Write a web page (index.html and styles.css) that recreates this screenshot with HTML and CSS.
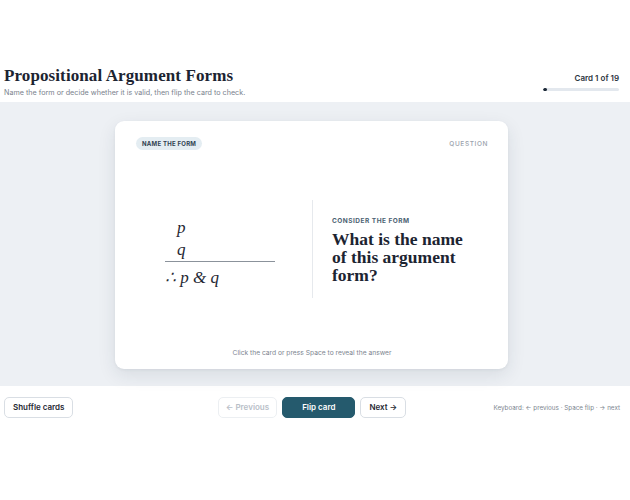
FILE: index.html
```html
<!DOCTYPE html>
<html lang="en">
<head>
<meta charset="utf-8">
<title>Propositional Argument Forms</title>
<link rel="stylesheet" href="styles.css">
</head>
<body>
<div class="app">
  <header class="top">
    <div class="titles">
      <h1 class="title">Propositional Argument Forms</h1>
      <p class="subtitle">Name the form or decide whether it is valid, then flip the card to check.</p>
    </div>
    <div class="progress">
      <div class="count">Card 1 of 19</div>
      <div class="track"><div class="fill" style="width:5.26%"></div></div>
    </div>
  </header>

  <main class="stage">
    <section class="card">
      <div class="card-head">
        <span class="pill">NAME THE FORM</span>
        <span class="side">QUESTION</span>
      </div>
      <div class="card-body">
        <div class="formula-col">
          <div class="formula">
            <div class="premise">p</div>
            <div class="premise">q</div>
            <div class="rule"></div>
            <div class="conclusion">∴ p &amp; q</div>
          </div>
        </div>
        <div class="prompt-col">
          <div class="eyebrow">CONSIDER THE FORM</div>
          <h2 class="question">What is the name of this argument form?</h2>
        </div>
      </div>
      <div class="hint">Click the card or press Space to reveal the answer</div>
    </section>
  </main>

  <footer class="controls">
    <div class="left">
      <button class="btn">Shuffle cards</button>
    </div>
    <div class="nav">
      <button class="btn disabled">← Previous</button>
      <button class="btn primary">Flip card</button>
      <button class="btn">Next →</button>
    </div>
    <div class="keys">Keyboard: ← previous · Space flip · → next</div>
  </footer>
</div>
</body>
</html>
```

FILE: styles.css
```css
* { box-sizing: border-box; }
html, body { margin: 0; padding: 0; background: #ffffff; }
body {
  font-family: Inter, "Liberation Sans", sans-serif;
  color: #1e2733;
}
.app { padding-top: 65px; }

.top {
  display: flex;
  justify-content: space-between;
  align-items: flex-end;
  padding: 0 11px 4px 4px;
}
.title {
  margin: 0;
  font-family: "Liberation Serif", "DejaVu Serif", serif;
  font-weight: 700;
  font-size: 17px;
  line-height: 22px;
  color: #1c2431;
  letter-spacing: 0.1px;
}
.subtitle {
  margin: 0;
  font-size: 7.2px;
  line-height: 11px;
  color: #7a828d;
}
.progress {
  width: 76px;
  display: flex;
  flex-direction: column;
  align-items: flex-end;
  padding-bottom: 7px;
}
.count {
  font-size: 8px;
  font-weight: 600;
  color: #2b3440;
  line-height: 12px;
  margin-bottom: 4px;
}
.track {
  width: 76px;
  height: 3px;
  background: #e3e8ee;
  border-radius: 2px;
  overflow: hidden;
}
.fill {
  height: 100%;
  background: #1e2a38;
  border-radius: 2px;
}

.stage {
  background: #edf0f4;
  padding: 19px 11px 17px 4px;
  display: flex;
  justify-content: center;
}
.card {
  width: 393px;
  height: 248px;
  background: #ffffff;
  border-radius: 9px;
  box-shadow: 0 6px 18px rgba(30, 45, 70, 0.10), 0 1px 3px rgba(30, 45, 70, 0.06);
  padding: 16px 20px 11px 21px;
  display: flex;
  flex-direction: column;
}
.card-head {
  display: flex;
  justify-content: space-between;
  align-items: center;
}
.pill {
  background: #e4edf2;
  color: #2f3f50;
  font-size: 6px;
  font-weight: 700;
  letter-spacing: 0.25px;
  padding: 3px 6px;
  border-radius: 8px;
  line-height: 7px;
}
.side {
  color: #9aa2ac;
  font-size: 6.5px;
  font-weight: 500;
  letter-spacing: 0.6px;
}
.card-body {
  flex: 1;
  display: grid;
  grid-template-columns: 1fr 1fr;
  align-items: center;
}
.formula-col {
  display: flex;
  justify-content: center;
  padding-right: 8px;
  padding-top: 7px;
}
.formula {
  width: 110px;
  font-family: "Liberation Serif", "DejaVu Serif", serif;
  font-style: italic;
  font-size: 17px;
  color: #1f2833;
}
.premise {
  padding-left: 12px;
  line-height: 22px;
}
.rule {
  height: 1.5px;
  background: #8b929b;
  margin: 0 0 6px;
}
.conclusion { line-height: 20px; }
.prompt-col {
  border-left: 1px solid #e6e9ed;
  padding: 17px 0 14px 19px;
}
.eyebrow {
  font-size: 6.5px;
  font-weight: 700;
  letter-spacing: 0.5px;
  color: #4c6272;
  margin-bottom: 5px;
}
.question {
  margin: 0;
  font-family: "Liberation Serif", "DejaVu Serif", serif;
  font-weight: 700;
  font-size: 17.5px;
  line-height: 18px;
  color: #1c2431;
  width: 138px;
}
.hint {
  text-align: center;
  font-size: 6.7px;
  color: #7d858f;
  line-height: 10px;
}

.controls {
  display: grid;
  grid-template-columns: 1fr auto 1fr;
  align-items: center;
  padding: 11px 10px 0 4px;
}
.left { display: flex; }
.nav { display: flex; gap: 5px; }
.btn {
  font-family: Inter, "Liberation Sans", sans-serif;
  font-size: 8px;
  font-weight: 600;
  color: #1f2833;
  background: #ffffff;
  border: 1px solid #d9dee4;
  border-radius: 5px;
  height: 21px;
  padding: 0 8px;
  line-height: 19px;
}
.btn.disabled {
  color: #b9c0c8;
  border-color: #eceff2;
  padding: 0 7px;
}
.btn.primary {
  background: #255a6d;
  border-color: #255a6d;
  color: #ffffff;
  padding: 0 19px;
}
.keys {
  text-align: right;
  font-size: 6.3px;
  color: #7d858f;
}
```
